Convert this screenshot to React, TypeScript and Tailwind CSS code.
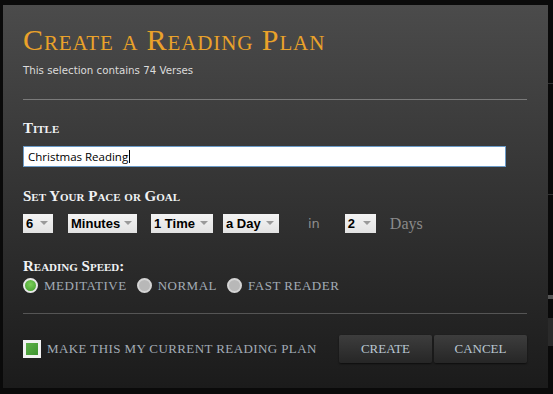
import React from "react";

const serif = { fontFamily: '"Liberation Serif", "DejaVu Serif", serif' } as React.CSSProperties;

function Select({ value, w }: { value: string; w: string }) {
  return (
    <div
      className={`flex items-center justify-between h-[19px] bg-[linear-gradient(#f4f4f4,#e2e2e2)] pl-[3px] pr-[5px] ${w}`}
      style={{ fontFamily: '"Liberation Sans", Arial, sans-serif' }}
    >
      <span className="text-[13px] font-bold text-black leading-none">{value}</span>
      <svg width="8" height="5" viewBox="0 0 8 5">
        <path d="M0 0 L8 0 L4 4 Z" fill="#9a9a9a" />
      </svg>
    </div>
  );
}

function Radio({ label, on }: { label: string; on?: boolean }) {
  return (
    <div className="flex items-center gap-[6px]">
      <div
        className={`w-[15px] h-[15px] rounded-full border-[2px] ${on ? "border-[#e8e8e8] bg-[radial-gradient(circle_at_50%_40%,#7ccf5a,#3f9a2a)]" : "border-[#d4d4d4] bg-[#b8b8b8]"}`}
      />
      <span className="text-[13px] text-[#a3acb6] tracking-[0.5px]" style={serif}>
        {label}
      </span>
    </div>
  );
}

const labelCls = "text-[15px] leading-[17px] font-bold text-[#f0f2f4]";

export default function App() {
  return (
    <div className="w-[553px] h-[394px] bg-[#0a0a0a] overflow-hidden relative">
      <div className="absolute left-[548px] top-[83px] w-[5px] h-[1px] bg-[#333]" />
      <div className="absolute left-[548px] top-[194px] w-[5px] h-[1px] bg-[#333]" />
      <div className="absolute left-[548px] top-[295px] w-[5px] h-[4px] bg-[#555]" />
      <div className="absolute left-[548px] top-[318px] w-[5px] h-[28px] bg-[#2a2a2a]" />
      <div className="pt-[5px] pl-[3px]">
        <div className="w-[545px] h-[383px] bg-[linear-gradient(#4b4b4b,#1b1b1b)] pl-[20px] pr-[21px] flex flex-col">
          <div
            className="mt-[18px] text-[30px] leading-[34px] text-[#eaa22a] tracking-[0.9px]"
            style={{ ...serif, fontVariant: "small-caps" }}
          >
            Create a Reading Plan
          </div>
          <div
            className="mt-[6px] leading-[14px] text-[#dcdcdc]"
            style={{ fontFamily: '"DejaVu Sans", Verdana, sans-serif', fontSize: "10.25px" }}
          >
            This selection contains 74 Verses
          </div>
          <div className="mt-[22px] h-[1px] bg-[#7a7a7a] w-full" />

          <div className={`mt-[20px] ${labelCls}`} style={{ ...serif, fontVariant: "small-caps" }}>
            Title
          </div>
          <div className="mt-[9px] w-[483px] h-[21px] bg-white border border-[#6b9bc8] flex items-center pl-[4px]">
            <span
              className="text-black"
              style={{ fontFamily: '"Open Sans", "Noto Sans", sans-serif', fontSize: "11.5px" }}
            >
              Christmas Reading
            </span>
            <span className="w-[1px] h-[13px] bg-black ml-[1px]" />
          </div>

          <div className={`mt-[21px] ${labelCls}`} style={{ ...serif, fontVariant: "small-caps" }}>
            Set Your Pace or Goal
          </div>
          <div className="mt-[9px] flex items-center h-[19px]">
            <Select value="6" w="w-[30px]" />
            <div className="w-[15px]" />
            <Select value="Minutes" w="w-[69px]" />
            <div className="w-[14px]" />
            <Select value="1 Time" w="w-[62px]" />
            <div className="w-[10px]" />
            <Select value="a Day" w="w-[56px]" />
            <span
              className="ml-[29px] text-[#8f8f8f]"
              style={{ fontFamily: '"DejaVu Sans", Verdana, sans-serif', fontSize: "13px" }}
            >
              in
            </span>
            <div className="w-[25px]" />
            <Select value="2" w="w-[31px]" />
            <span className="ml-[14px] text-[16px] text-[#8a8a8a]" style={serif}>
              Days
            </span>
          </div>

          <div className={`mt-[25px] ${labelCls}`} style={{ ...serif, fontVariant: "small-caps" }}>
            Reading Speed:
          </div>
          <div className="mt-[1px] flex items-center gap-[10px]">
            <Radio label="MEDITATIVE" on />
            <Radio label="NORMAL" />
            <Radio label="FAST READER" />
          </div>
          <div className="mt-[17px] h-[1px] bg-[#555] w-full" />

          <div className="mt-[21px] flex items-center">
            <div className="w-[18px] h-[18px] bg-[#f2f2f2] p-[3px]">
              <div className="w-full h-full bg-[linear-gradient(135deg,#5fb04a,#3e9430)]" />
            </div>
            <span className="ml-[6px] text-[13px] text-[#a3acb6] tracking-[0.4px]" style={serif}>
              MAKE THIS MY CURRENT READING PLAN
            </span>
            <div className="flex-1" />
            <button
              className="w-[93px] h-[28px] rounded-[2px] bg-[linear-gradient(#3d3d3d,#262626)] shadow-[0_1px_2px_rgba(0,0,0,0.6)] text-[13px] text-[#b9c6d2]"
              style={serif}
            >
              CREATE
            </button>
            <button
              className="ml-[2px] w-[93px] h-[28px] rounded-[2px] bg-[linear-gradient(#3d3d3d,#262626)] shadow-[0_1px_2px_rgba(0,0,0,0.6)] text-[13px] text-[#b9c6d2]"
              style={serif}
            >
              CANCEL
            </button>
          </div>
        </div>
      </div>
    </div>
  );
}
